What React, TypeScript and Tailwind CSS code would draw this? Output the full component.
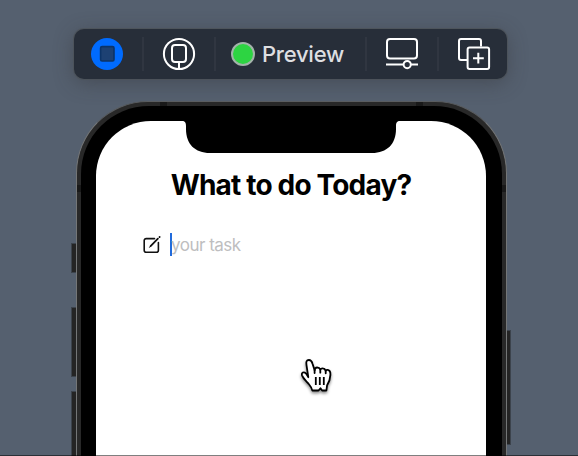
import type { ReactNode } from "react";

function StopIcon() {
  return (
    <svg width="34" height="34" viewBox="0 0 34 34">
      <circle cx="17" cy="17" r="16" fill="#006bfe" />
      <rect x="10.6" y="9.6" width="13.4" height="14.4" rx="1.5" fill="#1d4173" stroke="#0c3468" strokeWidth="1.6" />
    </svg>
  );
}

function InspectIcon() {
  return (
    <svg width="34" height="34" viewBox="0 0 34 34" fill="none" stroke="#fff" strokeWidth="2">
      <circle cx="17" cy="17" r="15.1" />
      <rect x="10" y="8" width="14" height="17" rx="3" />
      <path d="M17 25v7" />
    </svg>
  );
}

function DisplayIcon() {
  return (
    <svg width="34" height="34" viewBox="0 0 34 34" fill="none" stroke="#fff" strokeWidth="2">
      <rect x="2" y="2" width="30" height="19.6" rx="3" />
      <path d="M1 27.6h17.4M25.6 27.6H33" />
      <circle cx="22.2" cy="27.6" r="3.6" />
    </svg>
  );
}

function DuplicateIcon() {
  return (
    <svg width="34" height="34" viewBox="0 0 34 34" fill="none" stroke="#fff" strokeWidth="2">
      <path d="M10 23H4a2 2 0 0 1-2-2V4a2 2 0 0 1 2-2h18a2 2 0 0 1 2 2v5.5" />
      <rect x="10.6" y="10.5" width="21.5" height="21.5" rx="2" />
      <path d="M21.3 15.8v10.8M16 21.2h10.8" />
    </svg>
  );
}

function EditIcon() {
  return (
    <svg width="18" height="18" viewBox="0 0 18 18" fill="none" stroke="#111" strokeWidth="1.6" strokeLinecap="round">
      <path d="M11.5 2.6H3.2A2 2 0 0 0 1.2 4.6v9.7a2 2 0 0 0 2 2h10.2a2 2 0 0 0 2-2V6.5" />
      <path d="M7.6 10.2L14.9 2.7" strokeWidth="1.8" />
      <path d="M16.5 1.1l.1-.1" strokeWidth="1.8" />
      <path d="M6.6 11.3l.8-1" strokeWidth="1" />
    </svg>
  );
}

function HandCursor() {
  return (
    <svg className="drop-shadow-[0_2px_1.5px_rgba(0,0,0,0.45)]" width="34" height="36" viewBox="0 0 34 36" fill="#fff" stroke="#000" strokeWidth="1.8" strokeLinejoin="round" strokeLinecap="round">
      <path d="M8.3 19.2L6.5 7.2C5.9 3.6 6.5 2 8.900 2c2.200 0 3 1.500 3.700 4l2 6.300c.2-2 1-2.800 2.500-2.800 1.700 0 2.700.8 3.200 2 .6-1 1.400-1.300 2.500-1.200 1.500.1 2.400 1 2.800 2.400.6-.8 1.300-1 2.200-.8 2 .4 2.800 2 2.600 5-.2 4.500-1.200 7.200-3.300 10.300l-.7 5.300h-4.300l-1.600-2.200-2 2.200h-6.200c-.4-3-2-4.600-4.300-7.400C5.600 22.300 3.300 20.500 2 17.300c-.6-1.800.3-3 1.800-3 2 0 3.300 2.400 4.500 4.900z" />
      <path d="M14.6 12v3M20.3 11.7v3M25.700 12.800v2.500" />
      <path d="M15.800 19v8M19.800 19v8M23.800 19v8" strokeLinecap="butt" />
    </svg>
  );
}

function ToolButton({ className, children }: { className: string; children: ReactNode }) {
  return <button className={"flex h-full items-center justify-center " + className}>{children}</button>;
}

function Divider() {
  return <span className="h-[34px] w-[2px] shrink-0 bg-[#303641]" />;
}

function Toolbar() {
  return (
    <div className="ml-[74px] flex h-[50px] w-[433px] shrink-0 items-center rounded-[10px] bg-[#272e39] shadow-[0_0_0_1px_rgba(76,82,89,0.8),0_4px_20px_rgba(50,50,55,0.45)]">
      <ToolButton className="w-[68px] pr-[2px]"><StopIcon /></ToolButton>
      <Divider />
      <ToolButton className="w-[70px]"><InspectIcon /></ToolButton>
      <Divider />
      <ToolButton className="w-[149px] justify-start pl-[15px]">
        <span className="size-[24px] shrink-0 rounded-full border-2 border-[#a3b3aa] bg-[#2dd442]" />
        <span className="ml-[7px] text-[22px] leading-[26px] font-medium tracking-[-0.25px] whitespace-nowrap text-[#dedfe1]">Preview</span>
      </ToolButton>
      <Divider />
      <ToolButton className="w-[70px]"><DisplayIcon /></ToolButton>
      <Divider />
      <ToolButton className="w-[68px] pl-[2px]"><DuplicateIcon /></ToolButton>
    </div>
  );
}

function Screen() {
  return (
    <div className="h-full w-[390px] overflow-hidden rounded-t-[55px] bg-white">
      <svg className="mx-auto block" width="218" height="33" viewBox="0 0 218 33">
        <path d="M0 0C3 0 4 1.5 4 5v3C4 23 13 32 28 32h162c15 0 24-9 24-24V5c0-3.5 1-5 4-5z" />
      </svg>
      <h1 className="mt-[14px] text-center text-[28px] leading-[34px] font-bold tracking-[-0.82px] whitespace-nowrap text-black">What to do Today?</h1>
      <div className="mt-[31px] ml-[47px] flex items-center">
        <EditIcon />
        <span className="ml-[9px] h-[23px] w-[2px] bg-[#216bdc]" />
        <span className="-ml-px text-[17px] leading-[22px] tracking-[-0.5px] text-[#bebebf]">your task</span>
      </div>
      <div className="mt-[102px] ml-[204px]"><HandCursor /></div>
    </div>
  );
}

function SideButton({ className }: { className: string }) {
  return <span className={"shrink-0 border border-[#3c434c] bg-[#242424] " + className} />;
}

function AntennaBand({ className }: { className: string }) {
  return <span className={"absolute bg-[#191919] " + className} />;
}

function Phone() {
  return (
    <div className="flex min-h-0 flex-1 pl-[71px]">
      <div className="flex w-[5px] flex-col pt-[142px]">
        <SideButton className="h-[30px] border-r-0" />
        <SideButton className="mt-[34px] h-[70px] border-r-0" />
        <SideButton className="mt-[14px] h-[90px] border-r-0" />
      </div>
      <div className="relative w-[431px] rounded-t-[72px] border border-b-0 border-[#747677] border-t-[#5a5d60] bg-[#282828] px-[4px] pt-[4px]">
        <AntennaBand className="top-0 left-[83px] h-[4px] w-[7px]" />
        <AntennaBand className="top-0 right-[83px] h-[4px] w-[7px]" />
        <AntennaBand className="top-[83px] left-0 h-[7px] w-[4px]" />
        <AntennaBand className="top-[83px] right-0 h-[7px] w-[4px]" />
        <div className="h-full rounded-t-[68px] bg-black pt-[15px] pl-[15px]">
          <Screen />
        </div>
      </div>
      <div className="flex w-[4px] flex-col pt-[229px]">
        <SideButton className="h-[115px] border-l-0" />
      </div>
    </div>
  );
}

export default function App() {
  return (
    <div className="relative flex h-[456px] w-[578px] flex-col overflow-hidden bg-[#55606f] pt-[29px] font-['Inter','Liberation_Sans',sans-serif]">
      <Toolbar />
      <div className="h-[22px] shrink-0" />
      <Phone />
      <span className="absolute inset-x-0 bottom-0 h-px bg-black/50" />
    </div>
  );
}
